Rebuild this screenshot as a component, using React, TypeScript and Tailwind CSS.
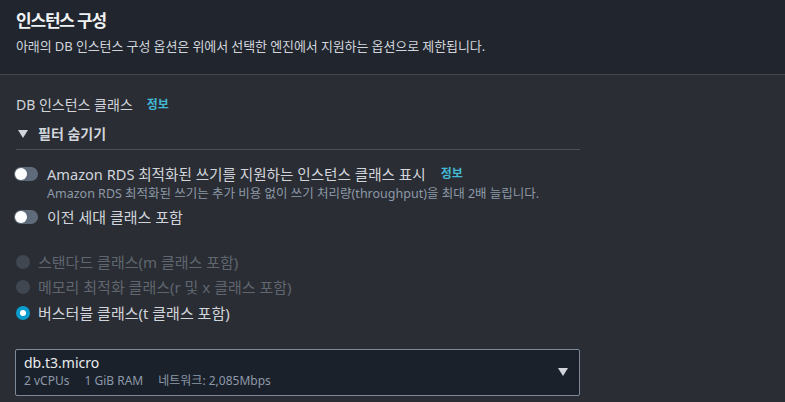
import React from "react";

function Toggle() {
  return (
    <span className="relative inline-flex h-[14px] w-[24px] shrink-0 items-center rounded-full bg-[#5f6b7a]">
      <span className="ml-[1px] h-[12px] w-[12px] rounded-full bg-white" />
    </span>
  );
}

function Radio({ checked, disabled, label }: { checked?: boolean; disabled?: boolean; label: string }) {
  return (
    <div className="flex h-[25.5px] items-center gap-[8px]">
      {checked ? (
        <span className="flex h-[14px] w-[14px] items-center justify-center rounded-full bg-[#0a9ccc]">
          <span className="h-[6px] w-[6px] rounded-full bg-white" />
        </span>
      ) : (
        <span className="h-[14px] w-[14px] rounded-full bg-[#414750]" />
      )}
      <span className={`text-[15px] ${disabled ? "text-[#5f6670]" : "text-[#d1d5db]"}`}>{label}</span>
    </div>
  );
}

export default function App() {
  return (
    <div
      className="h-[402px] w-[785px] overflow-hidden bg-[#2a2d33] text-[#d1d5db]"
      style={{ fontFamily: '"Noto Sans", "Noto Sans CJK KR", sans-serif' }}
    >
      <div className="h-[75px] border-b border-[#41454e] bg-[#21252e] px-[16px] pt-[7px]">
        <h1 className="text-[17px] font-bold leading-[28px] tracking-[-1.2px] text-[#f0f2f4]">인스턴스 구성</h1>
        <p className="mt-[1px] text-[13px] leading-[20px] tracking-[-0.1px] text-[#d1d5db]">
          아래의 DB 인스턴스 구성 옵션은 위에서 선택한 엔진에서 지원하는 옵션으로 제한됩니다.
        </p>
      </div>

      <div className="w-[580px] pl-[16px] pt-[19px]">
        <div className="flex items-center gap-[14px] text-[14px] leading-[22px]">
          <span>DB 인스턴스 클래스</span>
          <span className="text-[12px] font-bold text-[#44b9d6]">정보</span>
        </div>

        <div className="mt-[7px] flex items-center gap-[9px] pl-[1px] text-[14px] font-bold leading-[22px]">
          <svg width="12" height="10" viewBox="0 0 12 10">
            <path d="M1 1 L11 1 L6 9 Z" fill="#d1d5db" />
          </svg>
          <span>필터 숨기기</span>
        </div>

        <div className="mt-[4px] border-t border-[#4b4f57]" />

        <div className="mt-[12px] flex items-center gap-[9px]">
          <div className="-ml-[2px]">
            <Toggle />
          </div>
          <span className="text-[14.6px] leading-[20px]">Amazon RDS 최적화된 쓰기를 지원하는 인스턴스 클래스 표시</span>
          <span className="ml-[6px] text-[12px] font-bold text-[#44b9d6]">정보</span>
        </div>
        <div className="pl-[31px] text-[12.5px] leading-[16px] text-[#8d99a8]">
          Amazon RDS 최적화된 쓰기는 추가 비용 없이 쓰기 처리량(throughput)을 최대 2배 늘립니다.
        </div>

        <div className="mt-[3px] flex items-center gap-[9px]">
          <div className="-ml-[2px]">
            <Toggle />
          </div>
          <span className="text-[15px] leading-[20px]">이전 세대 클래스 포함</span>
        </div>

        <div className="mt-[20px] flex flex-col">
          <Radio disabled label="스탠다드 클래스(m 클래스 포함)" />
          <Radio disabled label="메모리 최적화 클래스(r 및 x 클래스 포함)" />
          <Radio checked label="버스터블 클래스(t 클래스 포함)" />
        </div>

        <div className="-ml-[1px] mt-[23px] flex h-[47px] w-[565px] items-center justify-between rounded-[2px] border border-[#7d8998] bg-[#1b212b] pl-[8px] pr-[10px]">
          <div className="flex flex-col">
            <span className="text-[14px] leading-[18px] text-[#e9ebed]">db.t3.micro</span>
            <span className="flex gap-[15px] text-[12px] leading-[18px] text-[#8d99a8]">
              <span>2 vCPUs</span>
              <span>1 GiB RAM</span>
              <span>네트워크: 2,085Mbps</span>
            </span>
          </div>
          <svg width="12" height="10" viewBox="0 0 12 10">
            <path d="M1 1 L11 1 L6 9 Z" fill="#d1d5db" />
          </svg>
        </div>
      </div>
    </div>
  );
}
